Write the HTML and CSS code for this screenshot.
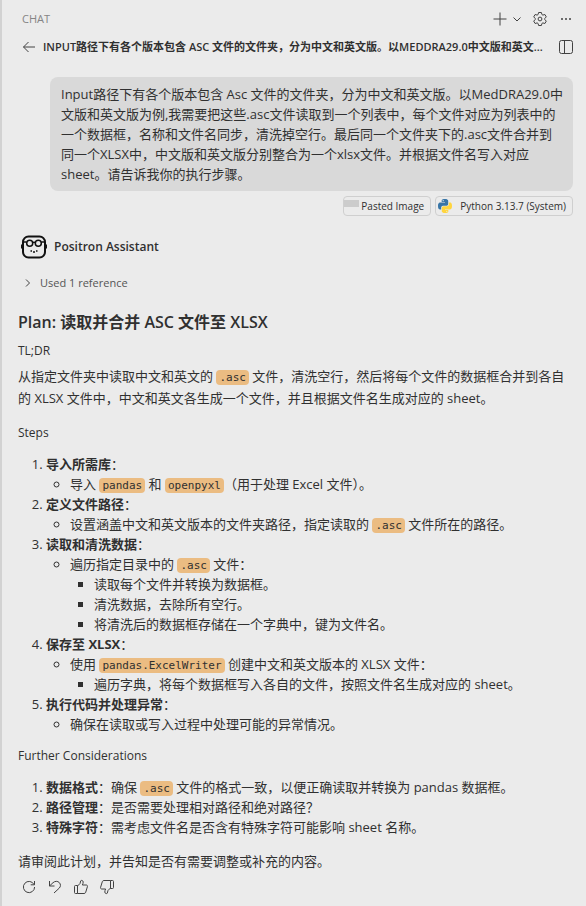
FILE: index.html
```html
<!DOCTYPE html>
<html lang="zh-CN">

<head>
    <meta charset="UTF-8">
    <meta name="viewport" content="width=device-width, initial-scale=1.0">
    <title>Chat</title>
    <link rel="stylesheet" href="styles.css">
</head>

<body>
    <div class="chat-panel">
        <header class="panel-header">
            <span class="panel-title">CHAT</span>
            <div class="panel-actions">
                <button class="icon-button" aria-label="New chat">
                    <svg width="16" height="16" viewBox="0 0 16 16"><path d="M8 1.5v13M1.5 8h13"/></svg>
                </button>
                <button class="icon-button" aria-label="New chat options">
                    <svg width="10" height="10" viewBox="0 0 10 10"><path d="M1.5 3.5L5 7l3.5-3.5"/></svg>
                </button>
                <button class="icon-button gear" aria-label="Settings">
                    <svg width="16" height="16" viewBox="0 0 16 16"><path d="M6.6 1.5h2.8l.5 2 1 .6 2-.6 1.4 2.4-1.5 1.5v1.2l1.5 1.5-1.4 2.4-2-.6-1 .6-.5 2H6.6l-.5-2-1-.6-2 .6-1.4-2.4 1.5-1.5V7.400L1.700 5.900l1.400-2.400 2 .6 1-.6z"/><circle cx="8" cy="8" r="1.9"/></svg>
                </button>
                <button class="icon-button" aria-label="More actions">
                    <svg width="16" height="16" viewBox="0 0 16 16"><g class="solid"><circle cx="4" cy="8" r="1"/><circle cx="8" cy="8" r="1"/><circle cx="12" cy="8" r="1"/></g></svg>
                </button>
            </div>
        </header>

        <div class="session-bar">
            <button class="icon-button" aria-label="Back">
                <svg width="16" height="16" viewBox="0 0 16 16"><path d="M14 8H2.500M7.500 3L2.500 8l5 5"/></svg>
            </button>
            <h1 class="session-title">INPUT路径下有各个版本包含 ASC 文件的文件夹，分为中文和英文版。以MEDDRA29.0中文版和英文...</h1>
            <button class="icon-button" aria-label="Toggle sidebar">
                <svg width="16" height="16" viewBox="0 0 16 16"><rect x="1.500" y="1.500" width="13" height="13" rx="2"/><path d="M6.500 1.500v13"/></svg>
            </button>
        </div>

        <section class="request">
            <p class="bubble">Input路径下有各个版本包含 Asc 文件的文件夹，分为中文和英文版。以MedDRA29.0中文版和英文版为例,我需要把这些.asc文件读取到一个列表中，每个文件对应为列表中的一个数据框，名称和文件名同步，清洗掉空行。最后同一个文件夹下的.asc文件合并到同一个XLSX中，中文版和英文版分别整合为一个xlsx文件。并根据文件名写入对应sheet。请告诉我你的执行步骤。</p>
            <div class="attachments">
                <a class="chip" href="#"><span class="thumb"></span>Pasted Image</a>
                <a class="chip runtime" href="#">
                    <svg class="python" width="16" height="16" viewBox="0 0 16 16">
                        <path fill="#3875a6" d="M7.900 1C4.500 1 4.700 2.500 4.700 2.500V4H8v.6H3.200S1 4.400 1 8s1.900 3.400 1.900 3.400h1.300V9.700s-.1-1.900 1.900-1.900h3.300s1.800 0 1.800-1.800v-3S11.500 1 7.900 1z"/>
                        <path fill="#ffd53e" d="M8.100 15c3.400 0 3.200-1.500 3.200-1.500V12H8v-.6h4.800S15 11.600 15 8s-1.900-3.400-1.900-3.400h-1.300v1.700s.1 1.900-1.900 1.900H6.600S4.800 8.200 4.800 10v3S4.500 15 8.100 15z"/>
                        <circle fill="#ebebeb" cx="6.200" cy="2.700" r=".6"/>
                        <circle fill="#ebebeb" cx="9.800" cy="13.300" r=".6"/>
                    </svg>
                    Python 3.13.7 (System)
                </a>
            </div>
        </section>

        <section class="response">
            <div class="author">
                <svg class="avatar" width="26" height="24" viewBox="0 0 26 24">
                    <rect x="2" y="1.500" width="22" height="21" rx="5.500" stroke-width="2"/>
                    <path d="M1 9.500v4M25 9.500v4" stroke-width="2"/>
                    <circle cx="8.700" cy="8.300" r="3"/>
                    <circle cx="17.300" cy="8.300" r="3"/>
                    <path d="M2 7h3.500M20.500 7H24M11.800 7.600q1.200-.8 2.400 0"/>
                    <path d="M9.500 16h1.500M12 17h2M15 16h1.500"/>
                </svg>
                <h2>Positron Assistant</h2>
            </div>

            <button class="references">
                <svg width="10" height="10" viewBox="0 0 10 10"><path d="M3 1.500L6.500 5 3 8.500"/></svg>
                Used 1 reference
            </button>

            <h3 class="plan-title">Plan: 读取并合并 ASC 文件至 XLSX</h3>
            <p class="label">TL;DR</p>
            <p class="summary">从指定文件夹中读取中文和英文的 <code>.asc</code> 文件，清洗空行，然后将每个文件的数据框合并到各自的 XLSX 文件中，中文和英文各生成一个文件，并且根据文件名生成对应的 sheet。</p>

            <p class="label">Steps</p>
            <ol>
                <li><strong>导入所需库</strong>：
                    <ul>
                        <li>导入 <code>pandas</code> 和 <code>openpyxl</code>（用于处理 Excel 文件）。</li>
                    </ul>
                </li>
                <li><strong>定义文件路径</strong>：
                    <ul>
                        <li>设置涵盖中文和英文版本的文件夹路径，指定读取的 <code>.asc</code> 文件所在的路径。</li>
                    </ul>
                </li>
                <li><strong>读取和清洗数据</strong>：
                    <ul>
                        <li>遍历指定目录中的 <code>.asc</code> 文件：
                            <ul>
                                <li>读取每个文件并转换为数据框。</li>
                                <li>清洗数据，去除所有空行。</li>
                                <li>将清洗后的数据框存储在一个字典中，键为文件名。</li>
                            </ul>
                        </li>
                    </ul>
                </li>
                <li><strong>保存至 XLSX</strong>：
                    <ul>
                        <li>使用 <code>pandas.ExcelWriter</code> 创建中文和英文版本的 XLSX 文件：
                            <ul>
                                <li>遍历字典，将每个数据框写入各自的文件，按照文件名生成对应的 sheet。</li>
                            </ul>
                        </li>
                    </ul>
                </li>
                <li><strong>执行代码并处理异常</strong>：
                    <ul>
                        <li>确保在读取或写入过程中处理可能的异常情况。</li>
                    </ul>
                </li>
            </ol>

            <p class="label">Further Considerations</p>
            <ol>
                <li><strong>数据格式</strong>：确保 <code>.asc</code> 文件的格式一致，以便正确读取并转换为 pandas 数据框。</li>
                <li><strong>路径管理</strong>：是否需要处理相对路径和绝对路径？</li>
                <li><strong>特殊字符</strong>：需考虑文件名是否含有特殊字符可能影响 sheet 名称。</li>
            </ol>

            <p class="closing">请审阅此计划，并告知是否有需要调整或补充的内容。</p>

            <div class="feedback">
                <button class="icon-button" aria-label="Retry">
                    <svg width="16" height="16" viewBox="0 0 16 16"><path d="M13 5.500A5.600 5.600 0 1 0 13.600 8M13.500 2v3.800H9.700"/></svg>
                </button>
                <button class="icon-button" aria-label="Undo">
                    <svg width="16" height="16" viewBox="0 0 16 16"><path d="M2.500 2v5h5M2.700 6.800L6 3.700c2-1.800 4.700-1.800 6.300-.1 1.600 1.600 1.500 4-.1 5.600L7 14"/></svg>
                </button>
                <button class="icon-button" aria-label="Helpful">
                    <svg width="16" height="16" viewBox="0 0 16 16"><path d="M4.500 6.500h-2a1 1 0 0 0-1 1v6a1 1 0 0 0 1 1h2zM4.500 7L7 4.500l.7-2.600c.3-.9 2.500-.6 2.500 1.100 0 1.100-.5 2.300-.8 3h3.800c1 0 1.500.8 1.200 1.700l-1.700 5.600c-.3.800-.8 1.200-1.600 1.200H4.500"/></svg>
                </button>
                <button class="icon-button" aria-label="Unhelpful">
                    <svg width="16" height="16" viewBox="0 0 16 16"><path d="M11.500 9.500h2a1 1 0 0 0 1-1v-6a1 1 0 0 0-1-1h-2zM11.500 9L9 11.500l-.7 2.600c-.3.900-2.500.6-2.500-1.100 0-1.100.5-2.300.8-3H2.800c-1 0-1.500-.8-1.200-1.700l1.700-5.600c.3-.8.8-1.200 1.600-1.200h6.600"/></svg>
                </button>
            </div>
        </section>
    </div>
</body>

</html>
```
FILE: styles.css
```css
* {
    box-sizing: border-box;
}

body {
    margin: 0;
    background: #ebebeb;
    color: #303030;
    font-family: "Open Sans", "Noto Sans CJK SC", sans-serif;
    font-size: 13px;
    line-height: 20px;
}

.chat-panel {
    min-height: 100vh;
    padding: 8px 12px 8px 16px;
    border-left: 2px solid #d2d2d2;
}

h1,
h2,
h3,
p {
    margin: 0;
}

button {
    padding: 0;
    border: none;
    background: none;
    color: inherit;
    font: inherit;
    cursor: pointer;
}

svg {
    display: block;
    flex: none;
    fill: none;
    stroke: #424242;
}

.solid {
    fill: #424242;
    stroke: none;
}

/* Header */
.panel-header,
.panel-actions,
.session-bar {
    display: flex;
    align-items: center;
}

.panel-header {
    justify-content: space-between;
    height: 22px;
    padding-left: 4px;
}

.panel-title {
    color: #858585;
    font-size: 11px;
}

.panel-actions {
    gap: 4px;
}

.gear {
    margin: 0 6px;
}

.session-bar {
    gap: 6px;
    height: 34px;
    padding-left: 3px;
}

.session-title {
    flex: 1;
    overflow: hidden;
    font-size: 11px;
    font-weight: 600;
    white-space: nowrap;
    text-overflow: ellipsis;
}

/* User request */
.request {
    margin: 13px 1px 0 32px;
}

.bubble {
    padding: 7px 8px 7px 11px;
    border-radius: 8px;
    background: #d9d9d9;
}

.attachments {
    display: flex;
    justify-content: flex-end;
    gap: 4px;
    margin-top: 5px;
}

.chip {
    display: flex;
    align-items: center;
    height: 20px;
    padding-right: 6px;
    border: 1px solid #cfcfcf;
    border-radius: 4px;
    color: inherit;
    font-size: 10px;
    text-decoration: none;
}

.thumb {
    width: 15px;
    height: 7px;
    margin: 0 2px 6px 0;
    background: #cccccc;
}

.runtime {
    gap: 7px;
    padding-left: 1px;
}

.python {
    stroke: none;
}

/* Assistant response */
.author {
    display: flex;
    align-items: center;
    gap: 7px;
    margin: 19px 0 0 3px;
}

.avatar {
    stroke: #111111;
    stroke-width: 1.5;
}

.author h2 {
    font-size: 12px;
    font-weight: 600;
}

.references {
    display: flex;
    align-items: center;
    gap: 7px;
    margin: 14px 0 0 5px;
    color: #555555;
    font-size: 11px;
}

.plan-title {
    margin: 19px 0 9px;
    font-size: 16px;
    font-weight: 600;
}

.summary {
    margin: 4px 0 14px;
    line-height: 22px;
}

.label {
    font-size: 12px;
}

code {
    padding: 1px 3px;
    border-radius: 4px;
    background: #ebbc82;
    font-family: "DejaVu Sans Mono", monospace;
    font-size: 11px;
    line-height: 14px;
}

ol,
ul {
    margin: 0;
    padding-left: 24px;
}

ol {
    margin: 11px 0 12px;
    padding-left: 28px;
}

.closing {
    margin-top: 14px;
}

.feedback {
    display: flex;
    gap: 10px;
    margin: 8px 0 0 3px;
}
```
